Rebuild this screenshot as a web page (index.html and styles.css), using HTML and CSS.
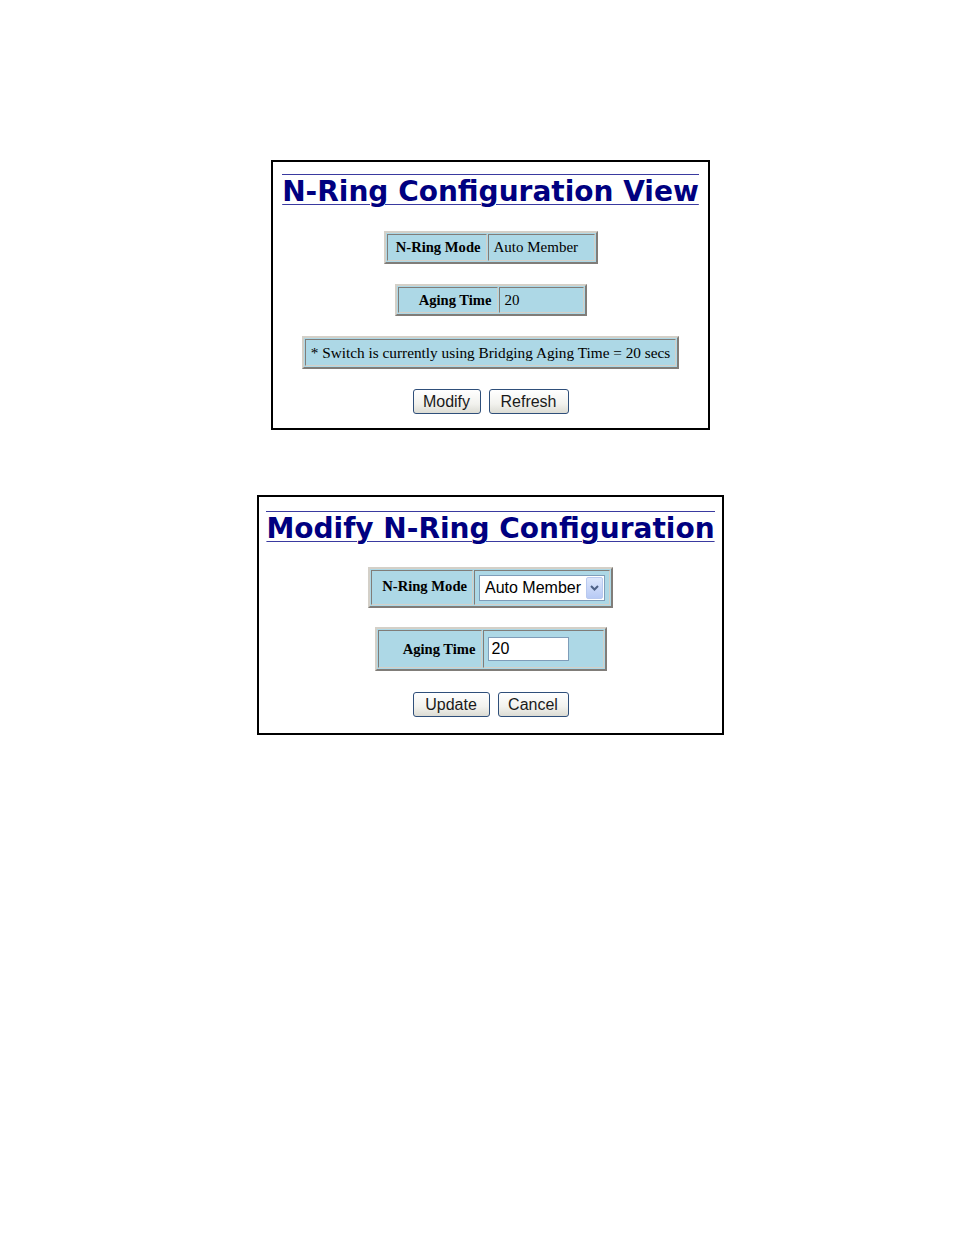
FILE: index.html
```html
<!DOCTYPE html>
<html>
<head>
<meta charset="utf-8">
<link rel="stylesheet" href="styles.css">
</head>
<body>
<div class="page">
  <div class="box box-view">
    <h1 class="title"><span>N-Ring Configuration View</span></h1>
    <table class="grid t-mode">
      <tr><th class="c1">N-Ring Mode</th><td class="c2">Auto Member</td></tr>
    </table>
    <table class="grid t-aging">
      <tr><th class="c1">Aging Time</th><td class="c2">20</td></tr>
    </table>
    <table class="grid t-note">
      <tr><td>* Switch is currently using Bridging Aging Time = 20 secs</td></tr>
    </table>
    <div class="buttons">
      <button class="btn b-modify">Modify</button>
      <button class="btn b-refresh">Refresh</button>
    </div>
  </div>

  <div class="box box-modify">
    <h1 class="title"><span>Modify N-Ring Configuration</span></h1>
    <table class="grid t-mode2">
      <tr><th class="c1">N-Ring Mode</th><td class="c2">
        <div class="select"><span class="sel-text">Auto Member</span><span class="sel-arrow"><svg width="11" height="8" viewBox="0 0 11 8"><path d="M2 2 L5.5 5.5 L9 2" fill="none" stroke="#4d6185" stroke-width="2"/></svg></span></div>
      </td></tr>
    </table>
    <table class="grid t-aging2">
      <tr><th class="c1">Aging Time</th><td class="c2"><div class="input">20</div></td></tr>
    </table>
    <div class="buttons b2">
      <button class="btn b-update">Update</button>
      <button class="btn b-cancel">Cancel</button>
    </div>
  </div>
</div>
</body>
</html>
```

FILE: styles.css
```css
html, body {
  margin: 0;
  padding: 0;
  background: #ffffff;
}
.page {
  width: 954px;
  height: 1235px;
  box-sizing: border-box;
  padding-left: 27px;
  padding-top: 160px;
  display: flex;
  flex-direction: column;
  align-items: center;
}
.box {
  border: 2px solid #000;
  box-sizing: border-box;
  display: flex;
  flex-direction: column;
  align-items: center;
}
.box-view {
  width: 439px;
  height: 270px;
  padding-top: 12px;
}
.box-modify {
  width: 467px;
  height: 240px;
  margin-top: 65px;
  padding-top: 14px;
}
.title {
  margin: 0;
  font-family: "DejaVu Sans", Verdana, sans-serif;
  font-weight: bold;
  font-size: 28px;
  line-height: 31px;
  color: #000080;
}
.title span {
  display: inline-block;
  border-top: 1px solid #3a3aa0;
  text-decoration: underline;
  text-decoration-thickness: 1px;
  text-underline-offset: 3px;
  text-decoration-color: #3a3aa0;
  padding-top: 1px;
}
.grid {
  background: #add8e6;
  border: 2px outset #d4d0c8;
  border-spacing: 1px;
  font-family: "Liberation Serif", "Times New Roman", serif;
  font-size: 15px;
  color: #000;
}
.grid th, .grid td {
  border: 1px inset #d4d0c8;
  padding: 0 5px;
  white-space: nowrap;
}
.grid th { font-weight: bold; text-align: right; font-size: 14.6px; }
.grid td { text-align: left; font-weight: normal; }

.t-mode { margin-top: 24px; height: 33px; }
.t-mode .c1 { width: 88px; }
.t-mode .c2 { width: 95px; }

.t-aging { margin-top: 20px; height: 32px; }
.t-aging .c1 { width: 88px; }
.t-aging .c2 { width: 73px; }

.t-note { margin-top: 20px; height: 33px; font-size: 15.3px; }

.buttons {
  display: flex;
  gap: 8px;
  margin-top: 20px;
}
.b2 { margin-top: 21px; }
.btn {
  height: 25px;
  box-sizing: border-box;
  border: 1px solid #2f4f7a;
  border-radius: 3px;
  background: linear-gradient(#ffffff, #f2f2ee 60%, #dcdcd4);
  font-family: "Liberation Sans", Arial, sans-serif;
  font-size: 16px;
  color: #1a1a1a;
  padding: 0;
}
.b-modify { width: 68px; }
.b-refresh { width: 80px; }
.b-update { width: 77px; }
.b-cancel { width: 71px; }

.t-mode2 { margin-top: 23px; height: 41px; }
.t-mode2 .c1 { width: 90px; vertical-align: top; padding-top: 7px; }
.t-mode2 .c2 { width: 125px; padding: 0 4px; }

.select {
  width: 126px;
  height: 26px;
  box-sizing: border-box;
  border: 1px solid #7f9db9;
  background: #fff;
  display: flex;
  align-items: center;
  font-family: "Liberation Sans", Arial, sans-serif;
  font-size: 16px;
  color: #000;
}
.sel-text { flex: 1; padding-left: 5px; padding-top: 1px; }
.sel-arrow {
  width: 17px;
  height: 22px;
  margin-right: 1px;
  box-sizing: border-box;
  border: 1px solid #b9c9ef;
  border-radius: 2px;
  background: linear-gradient(#dde7fb, #b8caf5);
  display: flex;
  align-items: center;
  justify-content: center;
}

.t-aging2 { margin-top: 19px; height: 44px; }
.t-aging2 .c1 { width: 92px; }
.t-aging2 .c2 { width: 111px; padding: 0 4px; }
.input {
  width: 81px;
  height: 24px;
  box-sizing: border-box;
  border: 1px solid #7f9db9;
  background: #fff;
  font-family: "Liberation Sans", Arial, sans-serif;
  font-size: 16px;
  line-height: 22px;
  padding-left: 3px;
  color: #000;
}
```
